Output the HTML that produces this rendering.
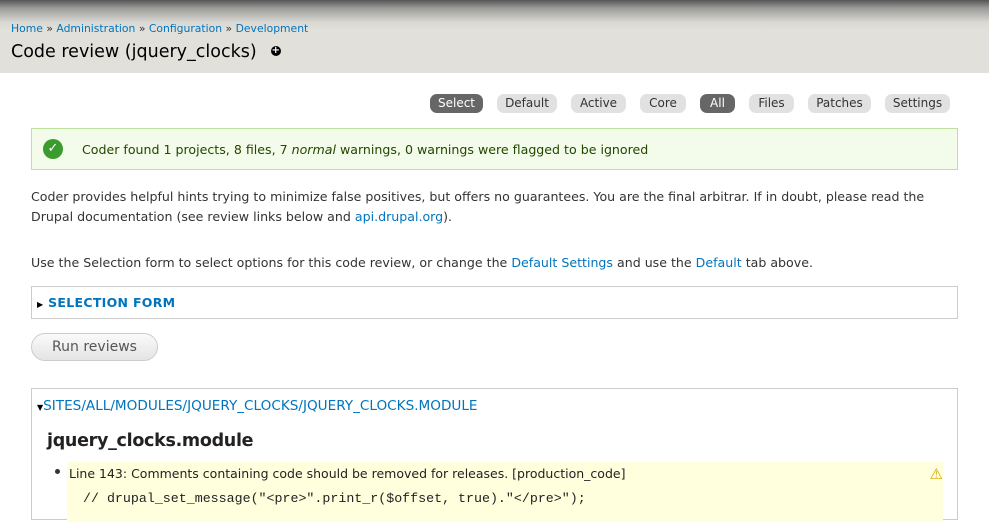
<!DOCTYPE html>
<html><head><style>
body{margin:0;width:989px;height:506px;overflow:hidden;background:#fff;font-family:"DejaVu Sans",sans-serif;font-size:12.6px;color:#333}
a{color:#0074bd;text-decoration:none}
#hd{position:absolute;left:0;top:0;width:989px;height:73px;background:linear-gradient(#555 0,#9a9a98 8px,#d8d7d2 22px,#e1e0db 30px)}
#bc{position:absolute;left:11px;top:22px;font-size:10.8px;color:#333}
#ti{position:absolute;left:11px;top:42px;font-size:17.5px;color:#000;font-weight:normal}
.plus{display:inline-block;width:10px;height:10px;border-radius:50%;background:#000;color:#fff;font-size:10px;line-height:10px;text-align:center;font-weight:bold;vertical-align:middle;margin-left:14px;position:relative;top:-1px}
.tab{position:absolute;top:94px;height:19px;line-height:19px;border-radius:7px;background:#e1e1e1;color:#333;font-size:12px;text-align:center}
.tab.on{background:#666;color:#fff}
#msg{position:absolute;left:31px;top:128px;width:925px;height:40px;background:#f3fbea;border:1px solid #bfe19e}
#msg .ck{position:absolute;left:11px;top:10px;width:20px;height:20px;border-radius:50%;background:#3a9b2e;color:#fff;text-align:center;line-height:20px;font-size:13px;font-weight:bold}
#msg span.t{position:absolute;left:50px;top:13px;color:#234600}
p{position:absolute;left:31px;margin:0;line-height:20px;width:925px}
.fs{position:absolute;left:31px;width:925px;border:1px solid #ccc}
.lg{color:#0074bd;font-size:12.5px;font-weight:bold;letter-spacing:.3px}
#btn{position:absolute;left:31px;top:333px;width:125px;height:26px;border:1px solid #ccc;border-radius:14px;background:linear-gradient(#fafafa,#e4e4e4);color:#555;font-size:14px;text-align:center;line-height:26px}
</style></head><body>
<div id="hd"><div id="bc"><a>Home</a> » <a>Administration</a> » <a>Configuration</a> » <a>Development</a></div>
<div id="ti">Code review (jquery_clocks)<span class="plus">+</span></div></div>
<div class="tab on" style="left:430px;width:53px">Select</div>
<div class="tab" style="left:497px;width:60px">Default</div>
<div class="tab" style="left:571px;width:55px">Active</div>
<div class="tab" style="left:640px;width:46px">Core</div>
<div class="tab on" style="left:700px;width:35px">All</div>
<div class="tab" style="left:749px;width:45px">Files</div>
<div class="tab" style="left:808px;width:63px">Patches</div>
<div class="tab" style="left:885px;width:65px">Settings</div>
<div id="msg"><div class="ck">✓</div><span class="t">Coder found 1 projects, 8 files, 7 <i>normal</i> warnings, 0 warnings were flagged to be ignored</span></div>
<p style="top:187px">Coder provides helpful hints trying to minimize false positives, but offers no guarantees. You are the final arbitrar. If in doubt, please read the Drupal documentation (see review links below and <a>api.drupal.org</a>).</p>
<p style="top:253px">Use the Selection form to select options for this code review, or change the <a>Default Settings</a> and use the <a>Default</a> tab above.</p>
<div class="fs" style="top:286px;height:31px"><span class="lg" style="position:absolute;left:5px;top:8px"><span style="font-size:8px;color:#000">▶</span> SELECTION FORM</span></div>
<div id="btn">Run reviews</div>
<div class="fs" style="top:388px;height:130px">
<span class="lg" style="position:absolute;left:5px;top:9px;font-weight:normal;font-size:13.6px;letter-spacing:0"><span style="font-size:8px;color:#000">▼</span>SITES/ALL/MODULES/JQUERY_CLOCKS/JQUERY_CLOCKS.MODULE</span>
<div style="position:absolute;left:15px;top:42px;font-size:17.5px;font-weight:bold;color:#222;letter-spacing:-.3px">jquery_clocks.module</div>
<div style="position:absolute;left:23px;top:80px;width:5px;height:5px;border-radius:50%;background:#333"></div>
<div style="position:absolute;left:35px;top:73px;width:876px;height:60px;background:#ffffdd">
<div style="position:absolute;left:2px;top:4px;font-size:12.5px;color:#222">Line 143: Comments containing code should be removed for releases. [production_code]</div>
<div style="position:absolute;right:0;top:3px;color:#d9a400;font-size:15px">⚠</div>
<div style="position:absolute;left:16px;top:29px;font-family:'Liberation Mono',monospace;font-size:13.3px;color:#222">// drupal_set_message("&lt;pre&gt;".print_r($offset, true)."&lt;/pre&gt;");</div>
</div></div>
</body></html>
